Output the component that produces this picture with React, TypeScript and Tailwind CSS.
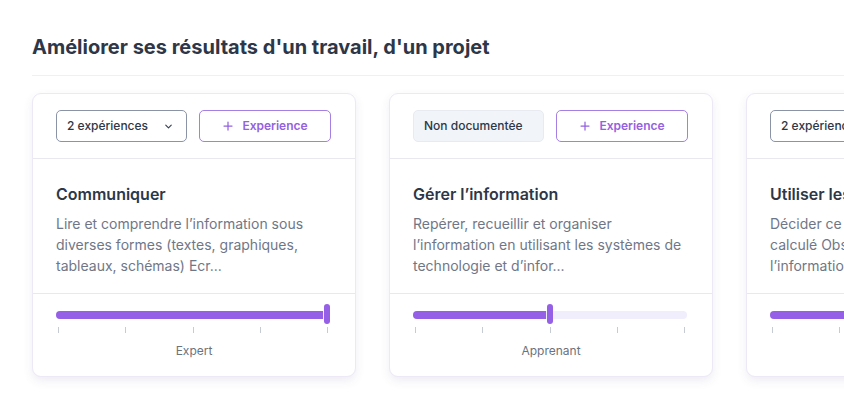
import React from "react";

type Card = {
  kind: "select" | "none";
  selectLabel?: string;
  title: string;
  desc: string;
  value: number; // 0..1
  level: string;
};

const cards: Card[] = [
  {
    kind: "select",
    selectLabel: "2 expériences",
    title: "Communiquer",
    desc: "Lire et comprendre l’information sous diverses formes (textes, graphiques, tableaux, schémas) Ecr...",
    value: 1,
    level: "Expert",
  },
  {
    kind: "none",
    title: "Gérer l’information",
    desc: "Repérer, recueillir et organiser l’information en utilisant les systèmes de technologie et d’infor...",
    value: 0.5,
    level: "Apprenant",
  },
  {
    kind: "select",
    selectLabel: "2 expériences",
    title: "Utiliser les nombres",
    desc: "Décider ce qui doit être mesuré ou calculé Observer et consigner l’information recueillie...",
    value: 0.75,
    level: "Confirmé",
  },
];

function Chevron() {
  return (
    <svg width="11" height="11" viewBox="0 0 24 24" fill="none" stroke="#374151" strokeWidth="2.5" strokeLinecap="round" strokeLinejoin="round">
      <path d="M6 9l6 6 6-6" />
    </svg>
  );
}

function Plus() {
  return (
    <svg width="12" height="12" viewBox="0 0 24 24" fill="none" stroke="#9461e0" strokeWidth="2.5" strokeLinecap="round">
      <path d="M12 4v16M4 12h16" />
    </svg>
  );
}

function Slider({ value }: { value: number }) {
  return (
    <div className="pr-[2px]">
      <div className="relative h-[20px]">
        <div className="absolute left-0 right-0 top-[7px] h-[8px] rounded-full bg-[#f0edfc]" />
        <div
          className="absolute left-0 top-[7px] h-[8px] rounded-l-full bg-[#9560e6]"
          style={{ width: `calc(${value} * (100% - 6px) - 1px)` }}
        />
        <div
          className="absolute top-0 h-[20px] w-[6px] rounded-full bg-[#9560e6]"
          style={{ left: `calc(${value} * (100% - 6px))` }}
        />
      </div>
      <div className="mt-[3px] flex justify-between pl-[2px] pr-[2px]">
        {[0, 1, 2, 3, 4].map((i) => (
          <div key={i} className="h-[6px] w-[1px] bg-[#c7cbd3]" />
        ))}
      </div>
    </div>
  );
}

function CardView({ c }: { c: Card }) {
  return (
    <div className="w-[324px] flex-none rounded-[9px] border border-[#ece8f6] bg-white shadow-[0_4px_10px_rgba(90,70,140,0.10)]">
      <div className="flex gap-[12px] px-[23px] py-[16px] border-b border-[#e9e8f0]">
        {c.kind === "select" ? (
          <div className="flex h-[32px] w-[131px] items-center justify-between rounded-[5px] border border-[#8a94a6] pl-[10px] pr-[12px] text-[12px] font-medium text-[#2d3748]">
            <span>{c.selectLabel}</span>
            <Chevron />
          </div>
        ) : (
          <div className="flex h-[32px] w-[131px] items-center rounded-[5px] border border-[#e7ebf1] bg-[#f1f4f8] pl-[10px] text-[12px] font-medium text-[#2d3748]">
            Non documentée
          </div>
        )}
        <div className="flex h-[32px] w-[132px] items-center justify-center gap-[8px] rounded-[5px] border border-[#a57fe3] text-[12px] font-semibold text-[#9461e0]">
          <Plus />
          <span>Experience</span>
        </div>
      </div>
      <div className="border-b border-[#e9e8f0] px-[23px] pt-[23px] pb-[17px]">
        <div className="text-[16px] leading-[24px] font-semibold text-[#2d3748] whitespace-nowrap">{c.title}</div>
        <p className="mt-[7px] text-[14px] leading-[21px] text-[#6f7787]">{c.desc}</p>
      </div>
      <div className="px-[23px] pt-[10px] pb-[17px]">
        <Slider value={c.value} />
        <div className="mt-[10px] text-center text-[12px] leading-[16px] text-[#6b7280]">{c.level}</div>
      </div>
    </div>
  );
}

export default function App() {
  return (
    <div className="h-[416px] w-[844px] overflow-hidden bg-white" style={{ fontFamily: "Inter, 'Noto Sans', sans-serif" }}>
      <div className="pl-[32px] pt-[33px]">
        <h1 className="text-[20px] leading-[28px] font-bold text-[#2d3748]">
          Améliorer ses résultats d'un travail, d'un projet
        </h1>
        <div className="mt-[14px] h-[1px] bg-[#eff0f3]" />
        <div className="mt-[17px] flex gap-[33px]">
          {cards.map((c, i) => (
            <CardView key={i} c={c} />
          ))}
        </div>
      </div>
    </div>
  );
}
